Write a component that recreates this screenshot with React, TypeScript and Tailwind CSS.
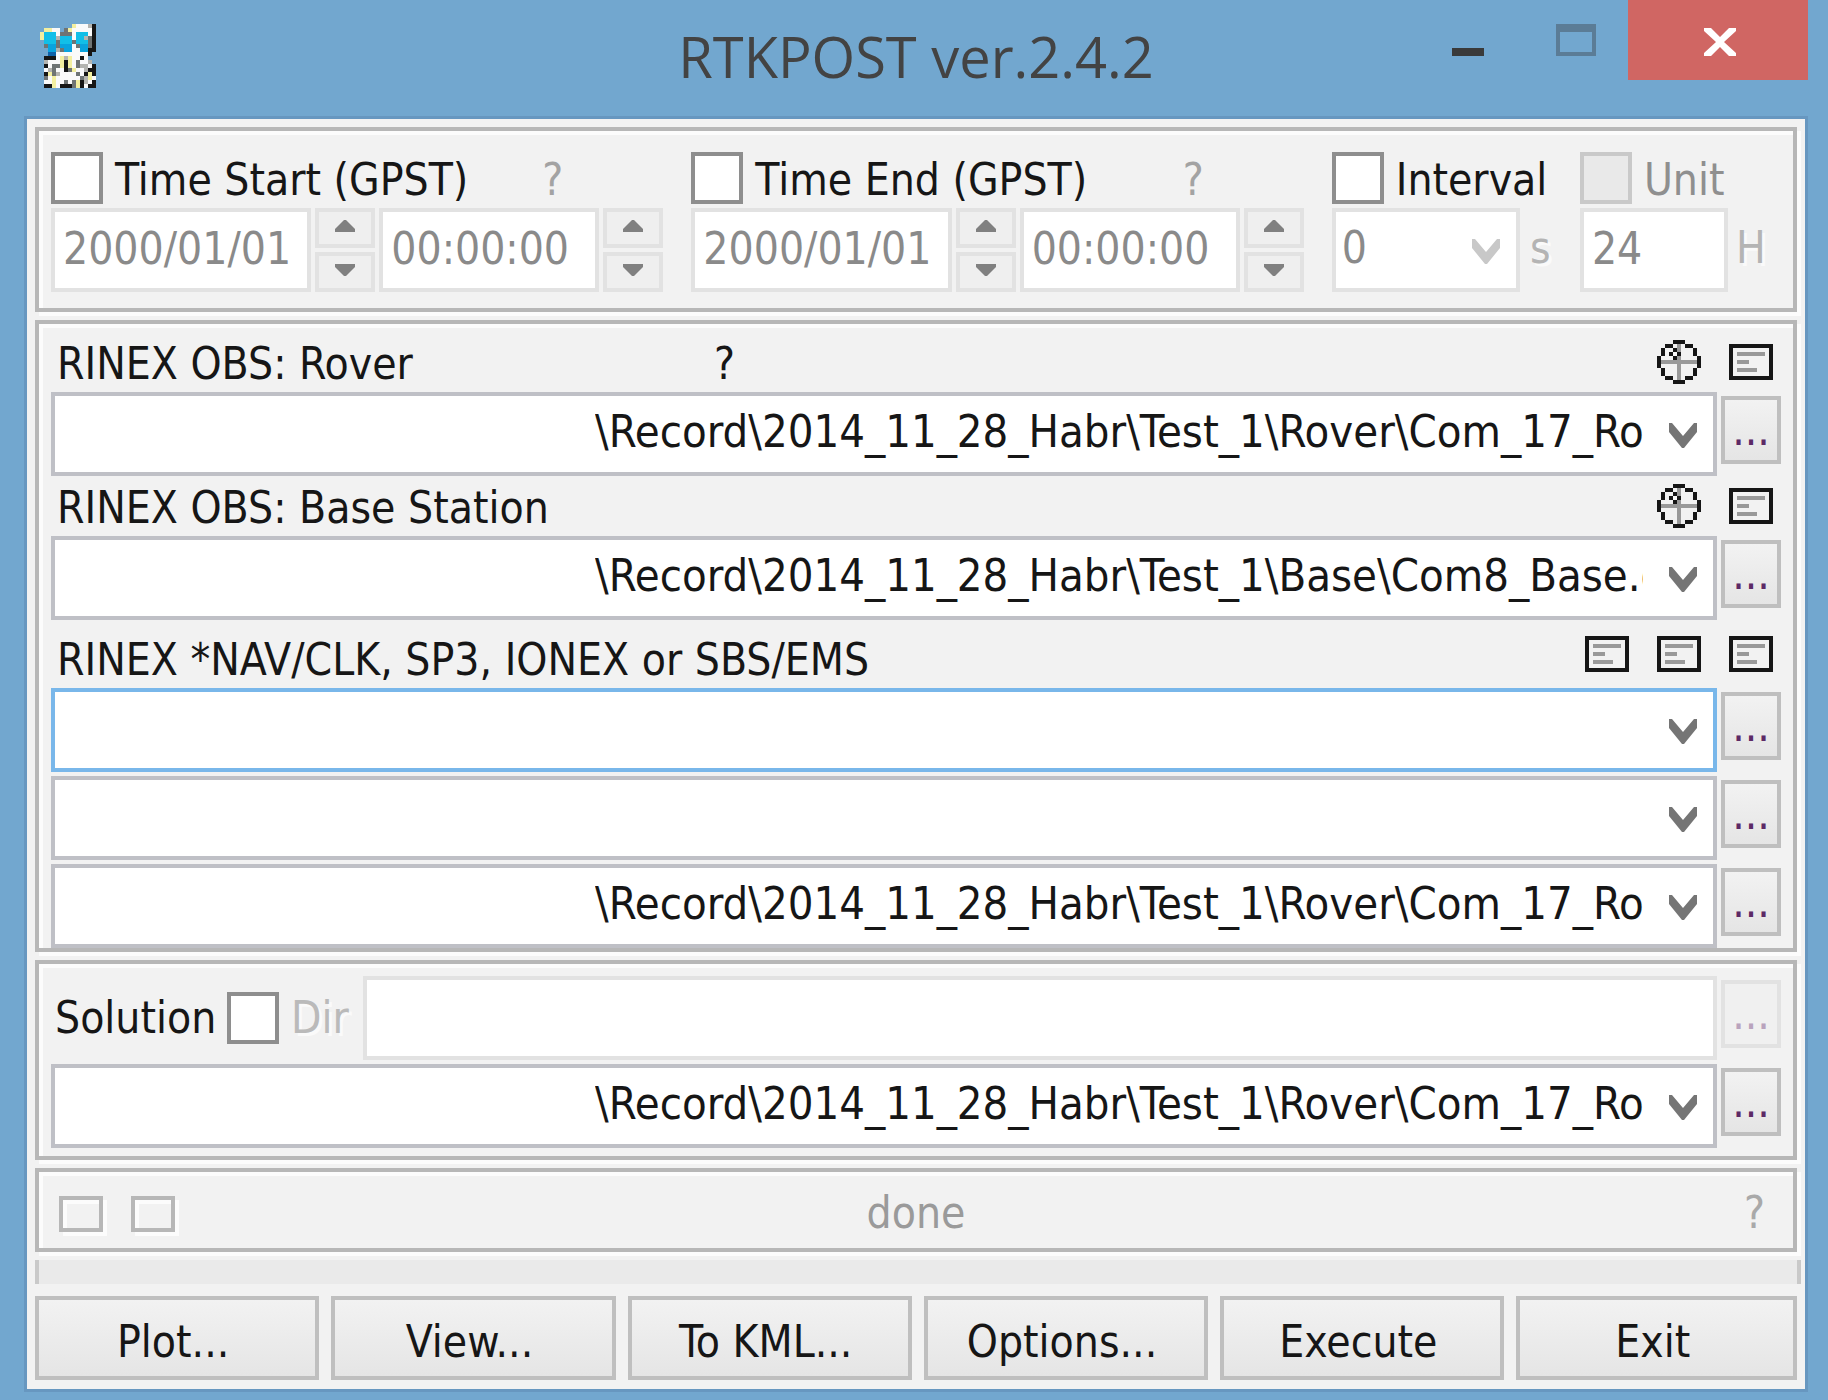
import { useState } from "react";

const palette: Record<string, string> = {
    k: "#161616",
    g: "#6f7474",
    l: "#999999",
    w: "#fafafa",
    y: "#f3efa0",
    c: "#12bfe8",
    b: "#0aa3de",
    d: "#0f62a8",
    e: "#b4b4b0",
};

const appIcon = [
    "........ywwwek",
    ".yyww.gywwwwwk",
    "ycccwgggwcccwk",
    "ycccecccwccegk",
    ".cccgcccgcccgk",
    ".gbbgbbbwgbbgk",
    "..bbegbbwwbbkk",
    "..ddwwwwwwwwk.",
    ".kkkwyeywwkw..",
    ".ewwwykywgwwe.",
    ".kwggykywgeewk",
    ".wegwwkgywwekk",
    ".kygewwwwgwkyk",
    ".gwywwwwwwgeyw",
    ".wwywwgwgykewk",
    ".kkywkkkgykwkk",
];

const globeIcon = [
    "....kkk....",
    "..kk.l.kk..",
    ".k..kl...k.",
    ".k.kwk...k.",
    "k...kl....k",
    "klllllllllk",
    "k....l....k",
    ".k...l...k.",
    ".k...l...k.",
    "..kk.l.kk..",
    "....kkk....",
];

const listIcon = [
    "kkkkkkkkkkk",
    "k.........k",
    "k.lllllll.k",
    "k.........k",
    "k.lll.....k",
    "k.........k",
    "k.lllll...k",
    "k.........k",
    "kkkkkkkkkkk",
];

// Small pixel drawings, four screen pixels per cell
function Sprite({ rows, className = "" }: { rows: string[]; className?: string }) {
    const cols = rows[0].length;
    return (
        <svg
            width={cols * 4}
            height={rows.length * 4}
            viewBox={`0 0 ${cols} ${rows.length}`}
            shapeRendering="crispEdges"
            aria-hidden="true"
            className={`shrink-0 ${className}`}
        >
            {rows.map((row, y) =>
                row.split("").map((cell, x) =>
                    cell === "." ? null : (
                        <rect key={`${x}-${y}`} x={x} y={y} width="1" height="1" fill={palette[cell]} />
                    )
                )
            )}
        </svg>
    );
}

function Chevron({ className }: { className: string }) {
    return (
        <svg
            width="28"
            height="25"
            viewBox="0 0 28 25"
            fill="currentColor"
            aria-hidden="true"
            className={`pointer-events-none col-start-1 row-start-1 mt-0.5 mr-5 justify-self-end ${className}`}
        >
            <path d="M0 0h3l11 13L25 0h3v9L15 25h-2L0 9z" />
        </svg>
    );
}

function Panel({ className, children }: { className: string; children: React.ReactNode }) {
    return (
        <section
            className={`border-4 border-[#b7b7b7] px-3 shadow-[4px_4px_0_#fcfcfc,inset_4px_4px_0_#fcfcfc] ${className}`}
        >
            {children}
        </section>
    );
}

function Check({ id, disabled }: { id: string; disabled?: boolean }) {
    return (
        <input
            id={id}
            type="checkbox"
            disabled={disabled}
            className="size-[52px] shrink-0 appearance-none border-4 border-[#8e8e8e] bg-white checked:bg-[#8e8e8e] disabled:border-[#c9c9c9] disabled:bg-[#e9e9e9]"
        />
    );
}

function Spinner({ label }: { label: string }) {
    return (
        <div className="flex flex-col gap-1">
            <button
                disabled
                aria-label={`${label} up`}
                className="flex flex-1 items-center justify-center border-4 border-[#e2e2e2] bg-[#efefef] pb-1"
            >
                <svg width="20" height="12" viewBox="0 0 20 12" fill="#808080" aria-hidden="true">
                    <path d="M9 0h2l9 9v3H0V9z" />
                </svg>
            </button>
            <button
                disabled
                aria-label={`${label} down`}
                className="flex flex-1 items-center justify-center border-4 border-[#e2e2e2] bg-[#efefef] pb-1"
            >
                <svg width="20" height="12" viewBox="0 0 20 12" fill="#808080" aria-hidden="true">
                    <path d="M0 0h20v3l-9 9H9L0 3z" />
                </svg>
            </button>
        </div>
    );
}

function TextField({ label, value }: { label: string; value: string }) {
    return (
        <input
            aria-label={label}
            defaultValue={value}
            disabled
            className="h-[84px] w-full min-w-0 border-4 border-[#e2e2e2] bg-white pb-1 pl-2 text-[#8a8a8a]"
        />
    );
}

function TimeGroup({ id, label }: { id: string; label: string }) {
    return (
        <div className="flex flex-col gap-1">
            <div className="flex items-center gap-3">
                <Check id={id} />
                <label htmlFor={id} className="flex-1 pt-1 whitespace-nowrap">
                    {label}
                </label>
                <button disabled className="mr-25 pt-1 text-[#a3a3a3]">
                    ?
                </button>
            </div>
            <div className="grid grid-cols-[259fr_60px_219fr_60px] gap-1">
                <TextField label={`${label} date`} value="2000/01/01" />
                <Spinner label={`${label} date`} />
                <TextField label={`${label} time`} value="00:00:00" />
                <Spinner label={`${label} time`} />
            </div>
        </div>
    );
}

function BrowseButton({ label, disabled }: { label: string; disabled?: boolean }) {
    return (
        <button
            aria-label={label}
            disabled={disabled}
            className="mt-1 flex h-[68px] w-[60px] shrink-0 items-center justify-center border-4 border-[#bfbfbf] bg-linear-to-b from-[#f2f2f2] to-[#e5e5e5] text-[#5c2a66] disabled:border-[#e2e2e2] disabled:from-[#f0f0f0] disabled:to-[#f0f0f0] disabled:text-[#b9a3bd]"
        >
            ...
        </button>
    );
}

function PathRow({ label, value = "", active }: { label: string; value?: string; active?: boolean }) {
    return (
        <div className="flex gap-1">
            <div className="grid h-[84px] min-w-0 flex-1 items-center">
                <select
                    aria-label={label}
                    className={`col-start-1 row-start-1 h-full w-full min-w-0 appearance-none border-4 bg-white pr-[70px] pb-1 pl-[540px] text-[45px] leading-[64px] ${
                        active ? "border-[#79b7ea]" : "border-[#bfc0c6]"
                    }`}
                >
                    <option>{value}</option>
                </select>
                <Chevron className="text-[#757575]" />
            </div>
            <BrowseButton label={`Browse ${label}`} />
        </div>
    );
}

function IconButton({ label, rows }: { label: string; rows: string[] }) {
    return (
        <button aria-label={label}>
            <Sprite rows={rows} />
        </button>
    );
}

const roverPath = "\\Record\\2014_11_28_Habr\\Test_1\\Rover\\Com_17_Ro";
const basePath = "\\Record\\2014_11_28_Habr\\Test_1\\Base\\Com8_Base.o";

export default function App() {
    const [status] = useState("done");

    return (
        <div className="flex min-h-screen flex-col bg-[#72a7cf] pr-5 pb-2 pl-6 font-['DejaVu_Sans_Condensed','DejaVu_Sans',sans-serif] text-[44px] leading-[44px] text-[#161616]">
            {/* Title bar */}
            <header className="grid h-[116px] grid-cols-[1fr_auto_1fr] items-start">
                <Sprite rows={appIcon} className="mt-6 ml-4" />
                <h1 className="pt-[18px] font-['Open_Sans',sans-serif] text-[56px] leading-[76px] text-[#434343]">
                    RTKPOST ver.2.4.2
                </h1>
                <div className="flex justify-end">
                    <button aria-label="Minimize" className="flex h-20 w-[112px] items-start justify-center pt-12">
                        <span className="h-2 w-8 bg-[#3a3a3a]" />
                    </button>
                    <button aria-label="Maximize" className="flex h-20 w-[104px] items-start justify-center pt-6">
                        <span className="h-8 w-10 border-4 border-t-8 border-[#5b7c96]" />
                    </button>
                    <button
                        aria-label="Close"
                        className="flex h-20 w-[180px] items-start justify-center bg-[#d06663] pt-7 pl-1"
                    >
                        <svg width="32" height="28" viewBox="0 0 32 28" fill="#fff" aria-hidden="true">
                            <path d="M0 0h7l9 9 9-9h7v3L20 14l12 11v3h-7l-9-9-9 9H0v-3l12-11L0 3z" />
                        </svg>
                    </button>
                </div>
            </header>

            <main className="flex flex-1 flex-col gap-2 border-[3px] border-[#6797c0] bg-[#f2f2f2] p-2">
                {/* Time span */}
                <Panel className="grid grid-cols-[612fr_612fr_220fr_201fr] gap-7 pt-[21px] pb-4">
                    <TimeGroup id="time-start" label="Time Start (GPST)" />
                    <TimeGroup id="time-end" label="Time End (GPST)" />
                    <div className="flex flex-col gap-1">
                        <div className="flex items-center gap-3">
                            <Check id="interval" />
                            <label htmlFor="interval" className="pt-1">
                                Interval
                            </label>
                        </div>
                        <div className="flex items-center">
                            <div className="grid h-[84px] min-w-0 flex-1 items-center">
                                <select
                                    aria-label="Interval seconds"
                                    disabled
                                    className="col-start-1 row-start-1 h-full w-full appearance-none border-4 border-[#e2e2e2] bg-white pb-1 pl-1.5 text-[#8a8a8a] opacity-100"
                                >
                                    <option>0</option>
                                </select>
                                <Chevron className="text-[#c8c8c8]" />
                            </div>
                            <span className="w-8 pb-1 pl-2.5 text-[#b4b4b4] text-shadow-[3px_3px_0_#fafafa]">s</span>
                        </div>
                    </div>
                    <div className="flex flex-col gap-1">
                        <div className="flex items-center gap-3">
                            <Check id="unit" disabled />
                            <label htmlFor="unit" className="pt-1 text-[#8f8f8f]">
                                Unit
                            </label>
                        </div>
                        <div className="flex items-center">
                            <TextField label="Unit hours" value="24" />
                            <span className="w-[53px] shrink-0 pb-1 pl-2 text-[#b4b4b4] text-shadow-[3px_3px_0_#fafafa]">
                                H
                            </span>
                        </div>
                    </div>
                </Panel>

                {/* Input files */}
                <Panel className="flex flex-col">
                    <div className="flex h-[68px] items-end justify-between pr-2 pl-1.5">
                        <div className="grid flex-1 grid-cols-[653fr_937fr] pb-1.5">
                            <h2>RINEX OBS: Rover</h2>
                            <button className="justify-self-start">?</button>
                        </div>
                        <div className="flex items-center gap-7 pb-2">
                            <IconButton label="Rover sky view" rows={globeIcon} />
                            <IconButton label="View rover file" rows={listIcon} />
                        </div>
                    </div>
                    <PathRow label="Rover file" value={roverPath} />
                    <div className="flex h-[60px] items-end justify-between pr-2 pl-1.5">
                        <h2 className="pb-1.5">RINEX OBS: Base Station</h2>
                        <div className="flex items-center gap-7 pb-2">
                            <IconButton label="Base sky view" rows={globeIcon} />
                            <IconButton label="View base file" rows={listIcon} />
                        </div>
                    </div>
                    <PathRow label="Base station file" value={basePath} />
                    <div className="flex h-[68px] items-end justify-between pr-2 pl-1.5">
                        <h2 className="pb-1.5">RINEX *NAV/CLK, SP3, IONEX or SBS/EMS</h2>
                        <div className="flex items-center gap-7 pb-4">
                            <IconButton label="View navigation file 1" rows={listIcon} />
                            <IconButton label="View navigation file 2" rows={listIcon} />
                            <IconButton label="View navigation file 3" rows={listIcon} />
                        </div>
                    </div>
                    <div className="flex flex-col gap-1">
                        <PathRow label="Navigation file 1" active />
                        <PathRow label="Navigation file 2" />
                        <PathRow label="Navigation file 3" value={roverPath} />
                    </div>
                </Panel>

                {/* Solution */}
                <Panel className="flex flex-col gap-1 pt-3 pb-2">
                    <div className="flex gap-1">
                        <div className="flex min-w-0 flex-1 items-center">
                            <h2 className="w-44 shrink-0 pl-1">Solution</h2>
                            <Check id="dir" />
                            <label
                                htmlFor="dir"
                                className="w-[84px] shrink-0 pl-3 text-[#bababa] text-shadow-[3px_3px_0_#fafafa]"
                            >
                                Dir
                            </label>
                            <TextField label="Solution directory" value="" />
                        </div>
                        <BrowseButton label="Browse directory" disabled />
                    </div>
                    <PathRow label="Solution file" value={roverPath} />
                </Panel>

                {/* Status */}
                <Panel className="grid h-[84px] grid-cols-[1fr_auto_1fr] items-center">
                    <div className="flex gap-7 pt-2 pl-2">
                        <span className="h-9 w-11 border-4 border-[#b7b7b7] shadow-[4px_4px_0_#fcfcfc,inset_4px_4px_0_#fcfcfc]" />
                        <span className="h-9 w-11 border-4 border-[#b7b7b7] shadow-[4px_4px_0_#fcfcfc,inset_4px_4px_0_#fcfcfc]" />
                    </div>
                    <p className="pt-1.5 text-[#9a9a9a]">{status}</p>
                    <button disabled className="mr-4 justify-self-end pt-1.5 text-[#a9a9a9]">
                        ?
                    </button>
                </Panel>

                <div
                    role="progressbar"
                    aria-label="Progress"
                    className="-mr-1 h-6 border-x-4 border-[#c9c9c9] bg-[#eaeaea]"
                />

                <footer className="mt-1 flex gap-3">
                    {["Plot...", "View...", "To KML...", "Options...", "Execute", "Exit"].map((name) => (
                        <button
                            key={name}
                            className="h-[84px] flex-[71] basis-0 border-4 border-[#bfbfbf] bg-linear-to-b from-[#f2f2f2] to-[#e5e5e5] pt-2 pr-2 last:flex-[70]"
                        >
                            {name}
                        </button>
                    ))}
                </footer>
            </main>
        </div>
    );
}
